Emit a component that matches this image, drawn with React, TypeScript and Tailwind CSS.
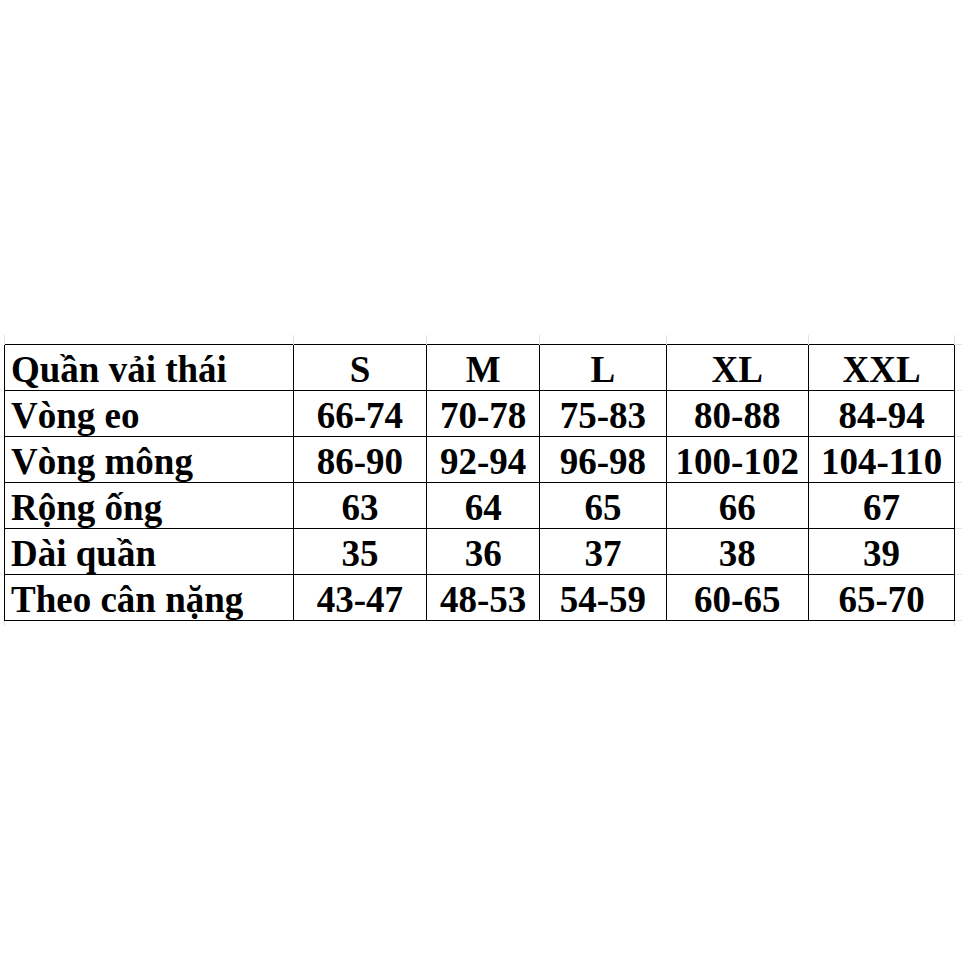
const sizes = ["S", "M", "L", "XL", "XXL"];

const rows = [
  { label: "Vòng eo", values: ["66-74", "70-78", "75-83", "80-88", "84-94"] },
  { label: "Vòng mông", values: ["86-90", "92-94", "96-98", "100-102", "104-110"] },
  { label: "Rộng ống", values: ["63", "64", "65", "66", "67"] },
  { label: "Dài quần", values: ["35", "36", "37", "38", "39"] },
  { label: "Theo cân nặng", values: ["43-47", "48-53", "54-59", "60-65", "65-70"] },
];

const colWidths = ["w-[289px]", "w-[134px]", "w-[113px]", "w-[127px]", "w-[142px]", "w-[147px]"];

const cell = "h-[45px] p-0 pt-[4px] leading-[41px] border border-black whitespace-nowrap";

const App = () => {
  return (
    <div className="w-[962px] h-[962px] bg-white overflow-hidden pt-[335px] pl-[4px]">
      <table
        className="table-fixed border-collapse text-black font-bold text-[37px]"
        style={{ fontFamily: '"Liberation Serif", "Times New Roman", serif' }}
      >
        <colgroup>
          {colWidths.map((w, i) => (
            <col key={i} className={w} />
          ))}
          <col className="w-[7px]" />
        </colgroup>
        <tbody>
          {/* faint spreadsheet grid above the table */}
          <tr className="h-[9px]">
            {colWidths.map((_, i) => (
              <td key={i} className="p-0 h-[9px] border-x border-[#e3e3e3]" />
            ))}
            <td className="p-0" />
          </tr>

          <tr>
            <td className={`${cell} text-left pl-[6px]`}>Quần vải thái</td>
            {sizes.map((s) => (
              <td key={s} className={`${cell} text-center`}>
                {s}
              </td>
            ))}
            <td className="p-0 border-y border-[#e3e3e3]" />
          </tr>

          {rows.map((row) => (
            <tr key={row.label}>
              <td className={`${cell} text-left pl-[6px]`}>{row.label}</td>
              {row.values.map((v, i) => (
                <td key={i} className={`${cell} text-center`}>
                  {v}
                </td>
              ))}
              <td className="p-0 border-y border-[#e3e3e3]" />
            </tr>
          ))}

          {/* faint grid below */}
          <tr className="h-[6px]">
            <td className="p-0 h-[6px] border-l border-[#e3e3e3]" />
            <td className="p-0" colSpan={4} />
            <td className="p-0 border-r border-[#e3e3e3]" />
            <td className="p-0" />
          </tr>
        </tbody>
      </table>
    </div>
  );
};

export default App;
